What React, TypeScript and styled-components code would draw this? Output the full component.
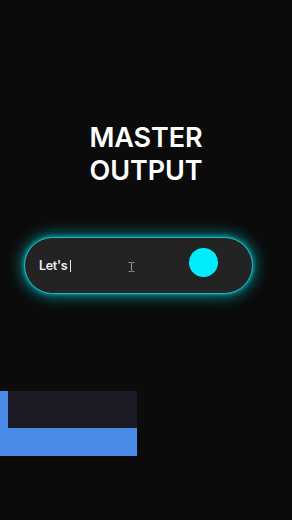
import React from 'react';
import styled, { createGlobalStyle } from 'styled-components';

const GlobalStyle = createGlobalStyle`
  html, body {
    margin: 0;
    padding: 0;
    background: #0b0b0b;
  }
  body {
    font-family: Inter, "Noto Sans", sans-serif;
  }
`;

const Page = styled.div`
  width: 292px;
  height: 520px;
  overflow: hidden;
  background: #0b0b0b;
  display: flex;
  flex-direction: column;
  padding-top: 121px;
  box-sizing: border-box;
`;

const Title = styled.h1`
  margin: 0;
  color: #ffffff;
  font-family: Inter, "Noto Sans", sans-serif;
  font-weight: 600;
  font-size: 27px;
  line-height: 33px;
  text-align: center;
  letter-spacing: -0.1px;
`;

const Pill = styled.div`
  margin: 50px 0 0 24px;
  width: 229px;
  height: 57px;
  box-sizing: border-box;
  border-radius: 29px;
  border: 1.5px solid #22b9bd;
  background: #232323;
  box-shadow:
    0 0 14px 3px rgba(0, 205, 215, 0.55),
    0 0 4px rgba(0, 240, 255, 0.7);
  display: flex;
  align-items: center;
  padding: 0 34px 0 14px;
`;

const Typed = styled.span`
  color: #f2f2f2;
  font-size: 12.5px;
  font-weight: 600;
  letter-spacing: -0.3px;
`;

const Caret = styled.span`
  display: inline-block;
  width: 1px;
  height: 12px;
  margin-left: 3px;
  background: #e6e6e6;
`;

const IBeam = styled.svg`
  margin-left: 57px;
  margin-top: 2px;
`;

const Knob = styled.div`
  margin-left: auto;
  margin-bottom: 7px;
  width: 29px;
  height: 29px;
  border-radius: 50%;
  background: #00eefc;
`;

const Footer = styled.div`
  margin-top: 97px;
  width: 137px;
  background: #4a8be8;
  padding: 0 0 28px 8px;
  box-sizing: border-box;
`;

const FooterPanel = styled.div`
  height: 37px;
  background: #1b1a25;
`;

export default function App() {
  return (
    <>
      <GlobalStyle />
      <Page>
        <Title>
          MASTER
          <br />
          OUTPUT
        </Title>
        <Pill>
          <Typed>Let's</Typed>
          <Caret />
          <IBeam width="7" height="10" viewBox="0 0 7 10" fill="none" stroke="#9a9a9a" strokeWidth="1" strokeLinecap="round">
            <path d="M1 0.5h1.5a1 1 0 0 1 1 1v7a1 1 0 0 1-1 1H1" />
            <path d="M6 0.5H4.5a1 1 0 0 0-1 1M6 9.5H4.5a1 1 0 0 1-1-1" />
          </IBeam>
          <Knob />
        </Pill>
        <Footer>
          <FooterPanel />
        </Footer>
      </Page>
    </>
  );
}
